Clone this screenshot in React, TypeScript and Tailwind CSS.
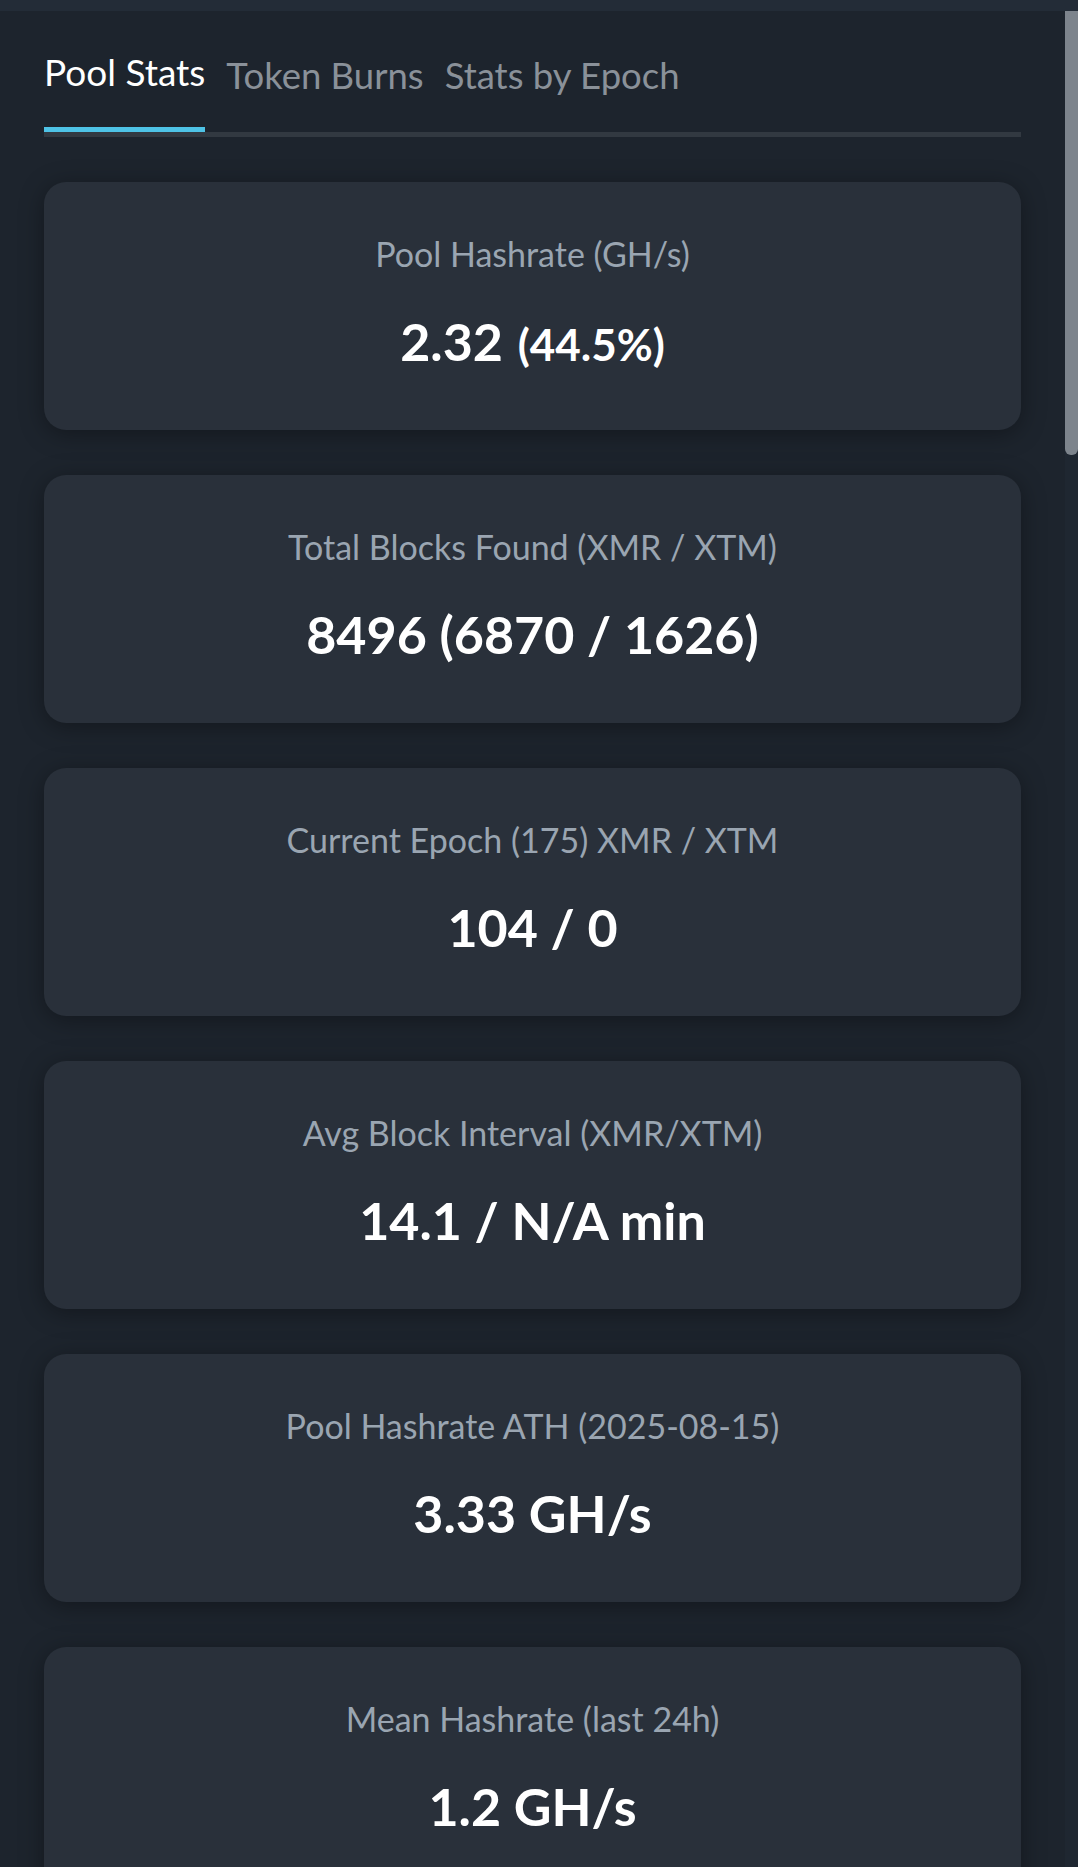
const stats = [
    { label: "Pool Hashrate (GH/s)", value: "2.32", extra: "(44.5%)" },
    { label: "Total Blocks Found (XMR / XTM)", value: "8496 (6870 / 1626)" },
    { label: "Current Epoch (175) XMR / XTM", value: "104 / 0" },
    { label: "Avg Block Interval (XMR/XTM)", value: "14.1 / N/A min" },
    { label: "Pool Hashrate ATH (2025-08-15)", value: "3.33 GH/s" },
    { label: "Mean Hashrate (last 24h)", value: "1.2 GH/s" },
]

const tabs = ["Pool Stats", "Token Burns", "Stats by Epoch"]

function StatCard({ label, value, extra }: { label: string; value: string; extra?: string }) {
    return (
        <div className="bg-[#29303a] rounded-[22px] shadow-[0_4px_24px_rgba(0,0,0,0.35)] pt-[46px] pb-[58px] flex flex-col items-center">
            <span className="text-[34px] leading-[51px] text-[#9aa5b1]">{label}</span>
            <span className="mt-[31px] h-[62px] text-[52px] leading-[62px] font-bold text-white">
                {value}
                {extra && (
                    <>
                        {" "}
                        <span className="ml-[2px] text-[44px] leading-none">{extra}</span>
                    </>
                )}
            </span>
        </div>
    )
}

export default function App() {
    return (
        <div className="h-[1867px] overflow-hidden bg-[#1d242d] flex flex-col font-['Lato',sans-serif]">
            <div className="h-[11px] bg-[#232c37] shrink-0" />
            <div className="flex flex-1 min-h-0">
                <main className="flex-1 px-[44px] pt-[41px] flex flex-col">
                    {/* tabs */}
                    <nav className="flex items-start gap-[21px] border-b-[5px] border-[#323941]">
                        {tabs.map((t, i) => (
                            <button
                                key={t}
                                className={
                                    i === 0
                                        ? "text-[37px] leading-[40px] text-white border-b-[5px] border-[#4ec3e6] pb-[35px]"
                                        : "text-[36.5px] leading-[40px] text-[#8a9199] pt-[3px] pb-[32px]"
                                }
                            >
                                {t}
                            </button>
                        ))}
                    </nav>
                    <div className="mt-[45px] flex flex-col gap-[45px]">
                        {stats.map(s => (
                            <StatCard key={s.label} {...s} />
                        ))}
                    </div>
                </main>
                {/* scrollbar */}
                <div className="w-[13px] bg-[#1f2731] shrink-0">
                    <div className="h-[444px] bg-[#7d848c] rounded-b-[6px]" />
                </div>
            </div>
        </div>
    )
}
